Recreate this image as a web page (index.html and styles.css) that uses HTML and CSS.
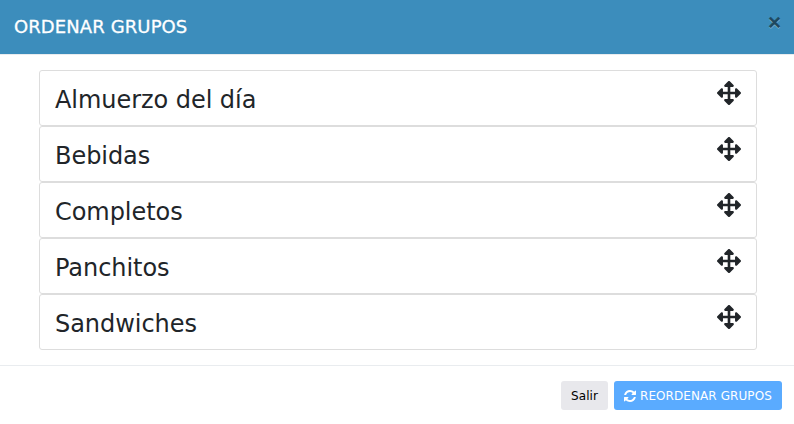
FILE: index.html
```html
<!DOCTYPE html>
<html lang="es">
<head>
<meta charset="utf-8">
<title>Ordenar grupos</title>
<link rel="stylesheet" href="styles.css">
</head>
<body>
<svg width="0" height="0" class="defs">
<symbol id="move" viewBox="0 0 512 512"><path d="M352.201 425.775l-79.196 79.196c-9.373 9.373-24.568 9.373-33.941 0l-79.196-79.196c-15.119-15.119-4.411-40.971 16.971-40.97h51.162L228 284H127.196v51.162c0 21.382-25.851 32.09-40.971 16.971L7.029 272.937c-9.373-9.373-9.373-24.569 0-33.941L86.225 159.8c15.119-15.119 40.971-4.411 40.971 16.971V228H228V127.196h-51.23c-21.382 0-32.09-25.851-16.971-40.971l79.196-79.196c9.373-9.373 24.568-9.373 33.941 0l79.196 79.196c15.119 15.119 4.411 40.971-16.971 40.971h-51.162V228h100.804v-51.162c0-21.382 25.851-32.09 40.97-16.971l79.196 79.196c9.373 9.373 9.373 24.569 0 33.941L425.773 352.2c-15.119 15.119-40.971 4.411-40.97-16.971V284H284v100.804h51.23c21.382 0 32.09 25.851 16.971 40.971z"/></symbol>
</svg>
<header class="header"><h5 class="title">ORDENAR GRUPOS</h5><button class="close">×</button></header>
<main class="body">
<ul class="list">
<li class="item"><span>Almuerzo del día</span><svg class="move"><use href="#move"/></svg></li>
<li class="item"><span>Bebidas</span><svg class="move"><use href="#move"/></svg></li>
<li class="item"><span>Completos</span><svg class="move"><use href="#move"/></svg></li>
<li class="item"><span>Panchitos</span><svg class="move"><use href="#move"/></svg></li>
<li class="item"><span>Sandwiches</span><svg class="move"><use href="#move"/></svg></li>
</ul>
</main>
<footer class="footer">
<button class="btn exit"><span class="label">Salir</span></button>
<button class="btn save"><svg class="sync" viewBox="0 128 1536 1536"><path d="M1511 1056q0 5-1 7-64 268-268 434.5t-478 166.5q-146 0-282.5-55t-243.5-157l-129 129q-19 19-45 19t-45-19-19-45v-448q0-26 19-45t45-19h448q26 0 45 19t19 45-19 45l-137 137q71 66 161 102t187 36q134 0 250-65t186-179q11-17 53-117 8-23 30-23h192q13 0 22.5 9.5t9.5 22.5zm25-800v448q0 26-19 45t-45 19h-448q-26 0-45-19t-19-45 19-45l138-138q-148-137-349-137-134 0-250 65t-186 179q-11 17-53 117-8 23-30 23h-199q-13 0-22.5-9.5t-9.5-22.5v-7q65-268 270-434.5t480-166.5q146 0 284 55.5t245 156.5l130-129q19-19 45-19t45 19 19 45z"/></svg><span class="label">REORDENAR GRUPOS</span></button>
</footer>
</body>
</html>
```

FILE: styles.css
```css
* { box-sizing: border-box; }
body { margin: 0; height: 424px; overflow: hidden; background: #fff; color: #212529; font-family: "DejaVu Sans", sans-serif; }
.defs { display: block; }
.header { height: 55px; background: #3c8dbc; border-bottom: 1px solid #e9ecef; display: flex; justify-content: space-between; align-items: flex-start; padding: 16px 12px 0 14px; }
.title { margin: 0; font-weight: 400; font-size: 18px; line-height: 22px; letter-spacing: 0.1px; color: #fff; -webkit-text-stroke: 0.3px #fff; }
.close { border: 0; padding: 0; margin-top: -4px; background: none; font: bold 18px/20px "DejaVu Sans", sans-serif; color: #1e475e; -webkit-text-stroke: 0.5px #1e475e; text-shadow: 0 1px 0 #9dc6dd; }
.body { padding: 15px 37px 15px 39px; }
.list { list-style: none; margin: 0; padding: 0; }
.item { height: 56px; border: 1px solid #ddd; border-radius: 3px; display: flex; justify-content: space-between; align-items: flex-start; padding: 10px 15px; font-size: 24px; line-height: 38px; letter-spacing: -0.05px; }
.move { width: 24px; height: 24px; fill: #212529; }
.footer { border-top: 1px solid #e9ecef; display: flex; justify-content: flex-end; gap: 6px; padding: 15px 12px; }
.btn { height: 29px; border: 0; border-radius: 3px; padding: 0 10px; font: 12px/29px "DejaVu Sans", sans-serif; display: flex; align-items: center; }
.exit { width: 47px; background: #e8e8ec; color: #000; }
.save { width: 168px; background: #5aabff; color: #fff; gap: 4px; }
.label { padding-top: 2px; letter-spacing: 0.08px; white-space: nowrap; }
.sync { width: 12px; height: 12px; flex: none; fill: #fff; }
```
